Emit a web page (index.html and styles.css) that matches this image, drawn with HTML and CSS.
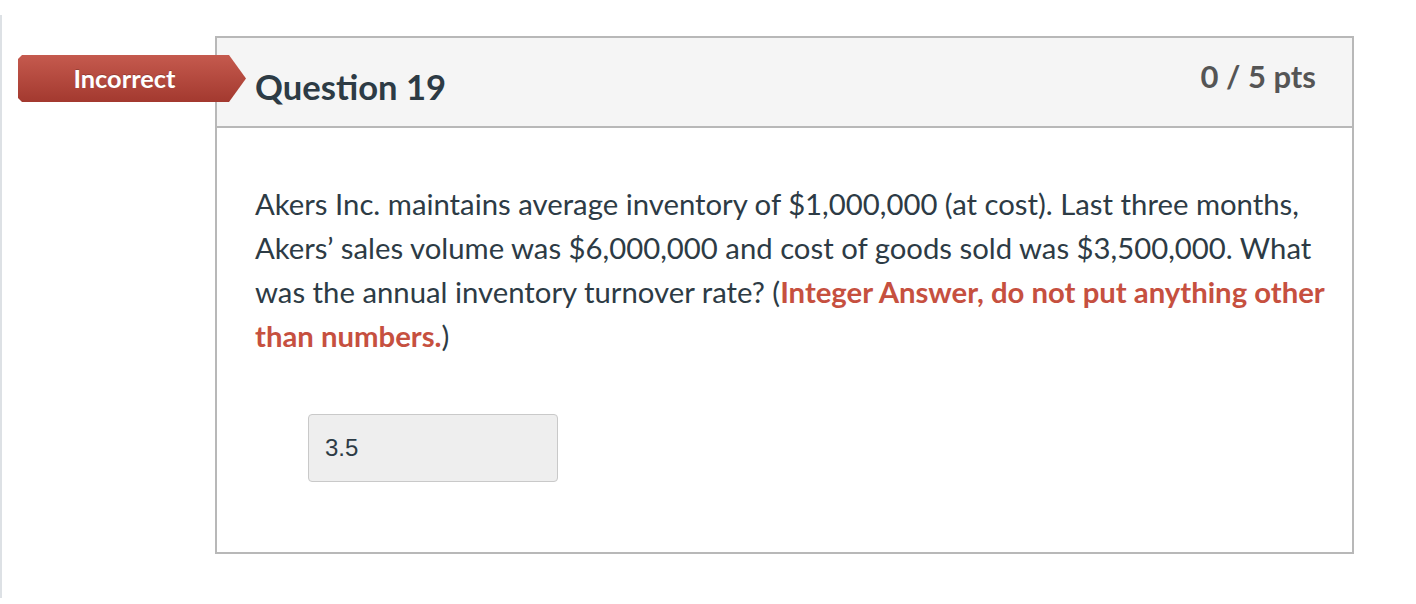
FILE: index.html
```html
<!DOCTYPE html>
<html>
<head>
<meta charset="utf-8">
<link rel="stylesheet" href="styles.css">
</head>
<body>
<div class="page">
  <div class="card">
    <div class="badge"><span>Incorrect</span></div>
    <div class="header">
      <h2 class="title">Question 19</h2>
      <div class="points">0 / 5 pts</div>
    </div>
    <div class="body">
      <p class="text">Akers Inc. maintains average inventory of $1,000,000 (at cost). Last three months, Akers’ sales volume was $6,000,000 and cost of goods sold was $3,500,000. What was the annual inventory turnover rate? (<strong class="warn">Integer Answer, do not put anything other than numbers.</strong>)</p>
      <div class="answer">3.5</div>
    </div>
  </div>
</div>
</body>
</html>
```
FILE: styles.css
```css
html, body {
  margin: 0;
  padding: 0;
  background: #ffffff;
}
body {
  font-family: Lato, "Liberation Sans", sans-serif;
  color: #2d3b45;
  height: 604px;
  overflow: hidden;
}
.page {
  margin-top: 15px;
  height: 583px;
  border-left: 2px solid #dde1e5;
  padding: 21px 0 0 213px;
  box-sizing: border-box;
}
.card {
  position: relative;
  width: 1139px;
  border: 2px solid #b8b8b8;
  box-sizing: border-box;
}
.badge {
  position: absolute;
  left: -199px;
  top: 17px;
  width: 228px;
  height: 47px;
  display: flex;
  align-items: center;
  justify-content: center;
  padding-right: 15px;
  padding-bottom: 2px;
  box-sizing: border-box;
  color: #ffffff;
  font-weight: 700;
  font-size: 25.4px;
  background: linear-gradient(#c55a4e, #a3392f);
  clip-path: polygon(0 4px, 4px 0, 211px 0, 228px 23.5px, 211px 47px, 4px 47px, 0 43px);
  text-shadow: 0 -1px 0 rgba(0,0,0,0.2);
}
.header {
  height: 88px;
  background: #f5f5f5;
  border-bottom: 2px solid #b8b8b8;
  display: flex;
  justify-content: space-between;
  align-items: flex-start;
  padding: 0 36px 0 38px;
}
.title {
  margin: 29px 0 0 0;
  font-size: 34.6px;
  font-weight: 700;
  line-height: 40px;
  color: #2d3b45;
}
.points {
  margin-top: 20px;
  font-size: 31px;
  font-weight: 700;
  line-height: 36px;
  color: #555555;
}
.body {
  padding: 54px 11px 70px 38px;
}
.text {
  margin: 0;
  font-size: 29.3px;
  line-height: 44px;
  color: #2d3b45;
}
.warn {
  color: #c6503f;
  font-weight: 700;
}
.answer {
  margin: 56px 0 0 53px;
  width: 250px;
  height: 68px;
  box-sizing: border-box;
  background: #eeeeee;
  border: 1px solid #c9c9c9;
  border-radius: 4px;
  padding-left: 16px;
  display: flex;
  align-items: center;
  font-family: "Liberation Sans", Arial, sans-serif;
  font-size: 24px;
  color: #2d3b45;
}
```
